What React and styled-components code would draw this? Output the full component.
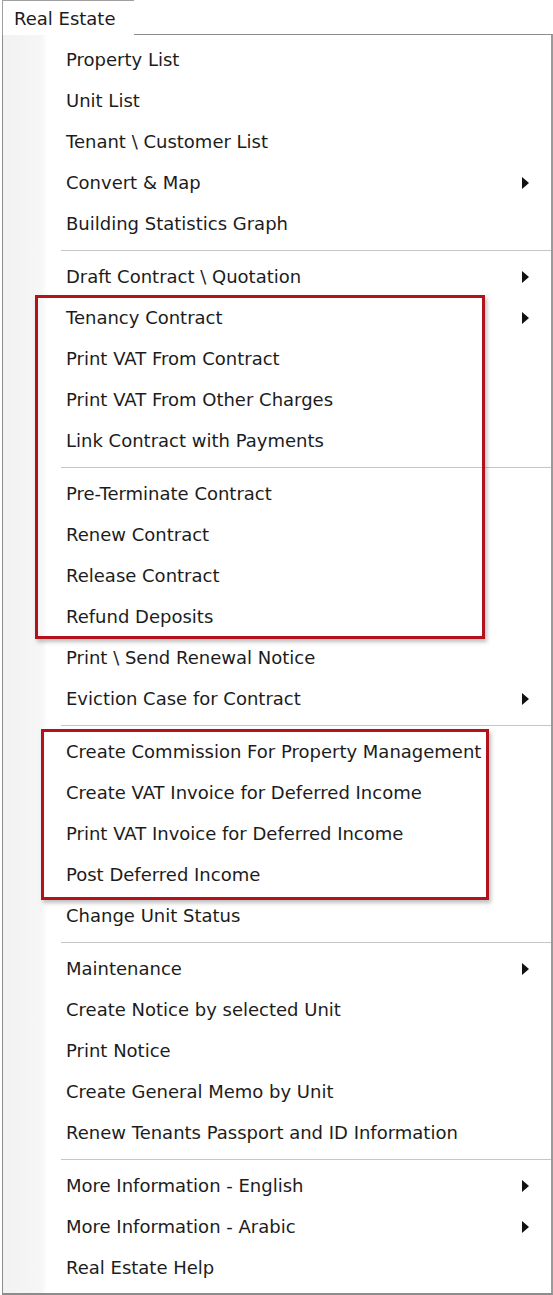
import React from 'react'
import styled, { createGlobalStyle } from 'styled-components'

const Global = createGlobalStyle`
    html, body {
        margin: 0;
        padding: 0;
        background: #ffffff;
    }
    body {
        font-family: "DejaVu Sans", Tahoma, sans-serif;
        color: #1c1c1c;
    }
`

const Page = styled.div`
    width: 553px;
    height: 1295px;
    overflow: hidden;
    padding-left: 2px;
    box-sizing: border-box;
`

const Tab = styled.div`
    position: relative;
    z-index: 2;
    width: 132px;
    height: 35px;
    margin-bottom: -1px;
    padding-left: 11px;
    box-sizing: border-box;
    border-top: 1px solid #a0a0a0;
    border-left: 1px solid #a0a0a0;
    background: #ffffff;
    font-size: 18px;
    line-height: 35px;
`

const Menu = styled.div`
    width: 551px;
    box-sizing: border-box;
    border: 1px solid #8c8c8c;
    border-right: 2px solid #9a9a9a;
    border-bottom: 2px solid #8c8c8c;
    padding: 4px 0 5px;
    background: linear-gradient(to right, #f2f2f2 0, #f6f6f6 38px, #fbfbfb 42px, #ffffff 44px);
`

const Row = styled.div`
    display: flex;
    align-items: center;
    height: 41px;
    padding-left: 63px;
    padding-right: 22px;
    font-size: 18px;
`

const Label = styled.span`
    flex: 1;
    white-space: nowrap;
`

const Arrow = styled.span`
    width: 0;
    height: 0;
    border-top: 6px solid transparent;
    border-bottom: 6px solid transparent;
    border-left: 7px solid #111;
`

const Separator = styled.div`
    height: 12px;
    display: flex;
    align-items: center;
    padding-left: 58px;

    &::before {
        content: "";
        flex: 1;
        height: 1px;
        background: #c6c6c6;
        box-shadow: 0 1px 0 #ffffff;
    }
`

const Highlight = styled.div`
    position: relative;

    &::after {
        content: "";
        position: absolute;
        top: -2px;
        bottom: ${p => p.$bottom}px;
        left: ${p => p.$left}px;
        right: ${p => p.$right}px;
        border: 3px solid #b3121c;
        box-shadow: 2px 3px 4px rgba(0, 0, 0, 0.25);
        pointer-events: none;
    }
`

const Item = ({ label, sub }) => (
    <Row>
        <Label>{label}</Label>
        {sub && <Arrow />}
    </Row>
)

export default function App() {
    return (
        <Page>
            <Global />
            <Tab>Real Estate</Tab>
            <Menu>
                <Item label="Property List" />
                <Item label="Unit List" />
                <Item label="Tenant \ Customer List" />
                <Item label="Convert & Map" sub />
                <Item label="Building Statistics Graph" />
                <Separator />
                <Item label="Draft Contract \ Quotation" sub />
                <Highlight $left={32} $right={66} $bottom={-2}>
                    <Item label="Tenancy Contract" sub />
                    <Item label="Print VAT From Contract" />
                    <Item label="Print VAT From Other Charges" />
                    <Item label="Link Contract with Payments" />
                    <Separator />
                    <Item label="Pre-Terminate Contract" />
                    <Item label="Renew Contract" />
                    <Item label="Release Contract" />
                    <Item label="Refund Deposits" />
                </Highlight>
                <Item label="Print \ Send Renewal Notice" />
                <Item label="Eviction Case for Contract" sub />
                <Separator />
                <Highlight $left={38} $right={62} $bottom={-5}>
                    <Item label="Create Commission For Property Management" />
                    <Item label="Create VAT Invoice for Deferred Income" />
                    <Item label="Print VAT Invoice for Deferred Income" />
                    <Item label="Post Deferred Income" />
                </Highlight>
                <Item label="Change Unit Status" />
                <Separator />
                <Item label="Maintenance" sub />
                <Item label="Create Notice by selected Unit" />
                <Item label="Print Notice" />
                <Item label="Create General Memo by Unit" />
                <Item label="Renew Tenants Passport and ID Information" />
                <Separator />
                <Item label="More Information - English" sub />
                <Item label="More Information - Arabic" sub />
                <Item label="Real Estate Help" />
            </Menu>
        </Page>
    )
}
